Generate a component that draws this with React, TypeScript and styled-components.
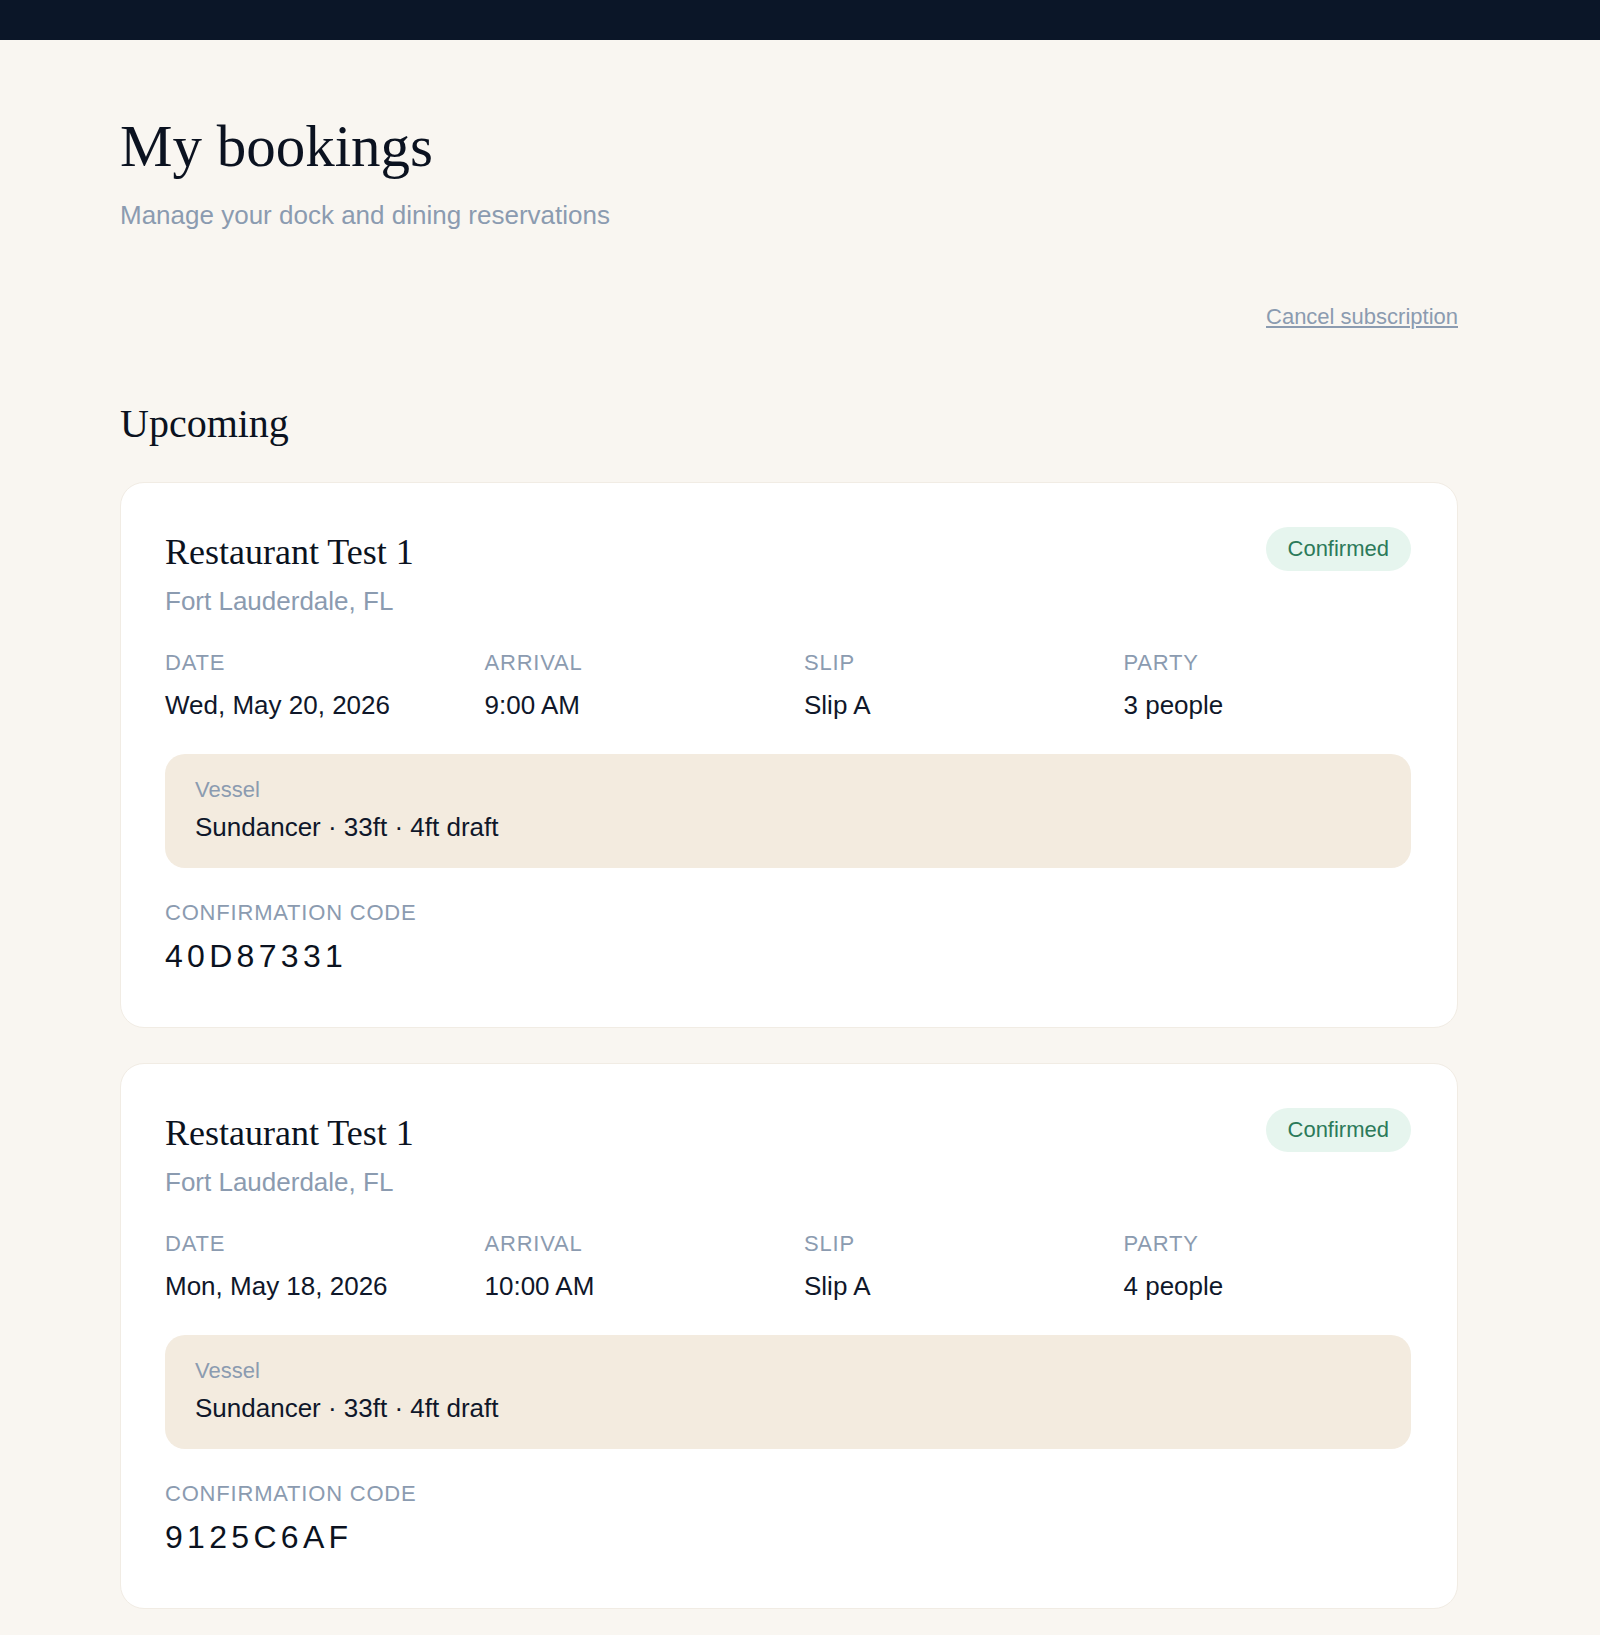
import React from "react";
import styled, { createGlobalStyle } from "styled-components";

const GlobalStyle = createGlobalStyle`
  html, body {
    margin: 0;
    padding: 0;
    background: #f9f6f1;
  }
  body {
    font-family: "Liberation Sans", Arial, sans-serif;
    color: #111827;
  }
`;

const TopBar = styled.div`
  height: 40px;
  background: #0b1628;
`;

const Main = styled.main`
  padding: 71px 142px 40px 120px;
  min-height: 1524px;
  box-sizing: border-box;
`;

const Title = styled.h1`
  margin: 0;
  font-family: "Liberation Serif", "Times New Roman", serif;
  font-weight: normal;
  font-size: 59px;
  line-height: 70px;
  color: #0b1220;
`;

const Subtitle = styled.p`
  margin: 18px 0 0;
  font-size: 26px;
  line-height: 32px;
  color: #8b9bb0;
`;

const Actions = styled.div`
  display: flex;
  justify-content: flex-end;
  margin-top: 72px;
`;

const CancelLink = styled.a`
  font-size: 22px;
  line-height: 28px;
  color: #8b9bb0;
  text-decoration: underline;
  cursor: pointer;
`;

const SectionTitle = styled.h2`
  margin: 70px 0 35px;
  font-family: "Liberation Serif", "Times New Roman", serif;
  font-weight: normal;
  font-size: 40px;
  line-height: 46px;
  color: #0b1220;
`;

const List = styled.div`
  display: flex;
  flex-direction: column;
  gap: 35px;
`;

const Card = styled.section`
  background: #ffffff;
  border: 1px solid #f1ece4;
  border-radius: 24px;
  padding: 44px 46px 51px 44px;
`;

const CardHead = styled.div`
  display: flex;
  justify-content: space-between;
  align-items: flex-start;
`;

const Venue = styled.h3`
  margin: 0;
  font-family: "Liberation Serif", "Times New Roman", serif;
  font-weight: normal;
  font-size: 36px;
  line-height: 50px;
  color: #0b1220;
`;

const Badge = styled.span`
  display: inline-flex;
  align-items: center;
  height: 44px;
  padding: 0 22px;
  border-radius: 22px;
  background: #e6f5ee;
  color: #2c7a5a;
  font-size: 22px;
`;

const Location = styled.div`
  margin-top: 8px;
  font-size: 26px;
  line-height: 32px;
  color: #8b9bb0;
`;

const Details = styled.div`
  display: grid;
  grid-template-columns: repeat(4, 1fr);
  gap: 32px;
  margin-top: 32px;
`;

const Label = styled.div`
  font-size: 22px;
  line-height: 28px;
  letter-spacing: 0.8px;
  text-transform: uppercase;
  color: #8b9bb0;
`;

const Value = styled.div`
  margin-top: 12px;
  font-size: 26px;
  line-height: 32px;
  color: #0f172a;
`;

const VesselBox = styled.div`
  margin-top: 33px;
  background: #f3ebdf;
  border-radius: 20px;
  padding: 23px 30px 25px;
`;

const VesselLabel = styled.div`
  font-size: 22px;
  line-height: 26px;
  color: #8b9bb0;
`;

const VesselValue = styled.div`
  margin-top: 8px;
  font-size: 26px;
  line-height: 32px;
  color: #0f172a;
`;

const CodeBlock = styled.div`
  margin-top: 31px;
`;

const Code = styled.div`
  margin-top: 9px;
  font-size: 32px;
  line-height: 40px;
  letter-spacing: 4.3px;
  color: #0b1220;
`;

type Booking = {
  venue: string;
  location: string;
  date: string;
  arrival: string;
  slip: string;
  party: string;
  vessel: string;
  code: string;
};

const bookings: Booking[] = [
  {
    venue: "Restaurant Test 1",
    location: "Fort Lauderdale, FL",
    date: "Wed, May 20, 2026",
    arrival: "9:00 AM",
    slip: "Slip A",
    party: "3 people",
    vessel: "Sundancer · 33ft · 4ft draft",
    code: "40D87331",
  },
  {
    venue: "Restaurant Test 1",
    location: "Fort Lauderdale, FL",
    date: "Mon, May 18, 2026",
    arrival: "10:00 AM",
    slip: "Slip A",
    party: "4 people",
    vessel: "Sundancer · 33ft · 4ft draft",
    code: "9125C6AF",
  },
];

const BookingCard = ({ b }: { b: Booking }) => (
  <Card>
    <CardHead>
      <Venue>{b.venue}</Venue>
      <Badge>Confirmed</Badge>
    </CardHead>
    <Location>{b.location}</Location>
    <Details>
      <div>
        <Label>Date</Label>
        <Value>{b.date}</Value>
      </div>
      <div>
        <Label>Arrival</Label>
        <Value>{b.arrival}</Value>
      </div>
      <div>
        <Label>Slip</Label>
        <Value>{b.slip}</Value>
      </div>
      <div>
        <Label>Party</Label>
        <Value>{b.party}</Value>
      </div>
    </Details>
    <VesselBox>
      <VesselLabel>Vessel</VesselLabel>
      <VesselValue>{b.vessel}</VesselValue>
    </VesselBox>
    <CodeBlock>
      <Label>Confirmation code</Label>
      <Code>{b.code}</Code>
    </CodeBlock>
  </Card>
);

export default function App() {
  return (
    <>
      <GlobalStyle />
      <TopBar />
      <Main>
        <Title>My bookings</Title>
        <Subtitle>Manage your dock and dining reservations</Subtitle>
        <Actions>
          <CancelLink>Cancel subscription</CancelLink>
        </Actions>
        <SectionTitle>Upcoming</SectionTitle>
        <List>
          {bookings.map((b) => (
            <BookingCard key={b.code} b={b} />
          ))}
        </List>
      </Main>
    </>
  );
}
